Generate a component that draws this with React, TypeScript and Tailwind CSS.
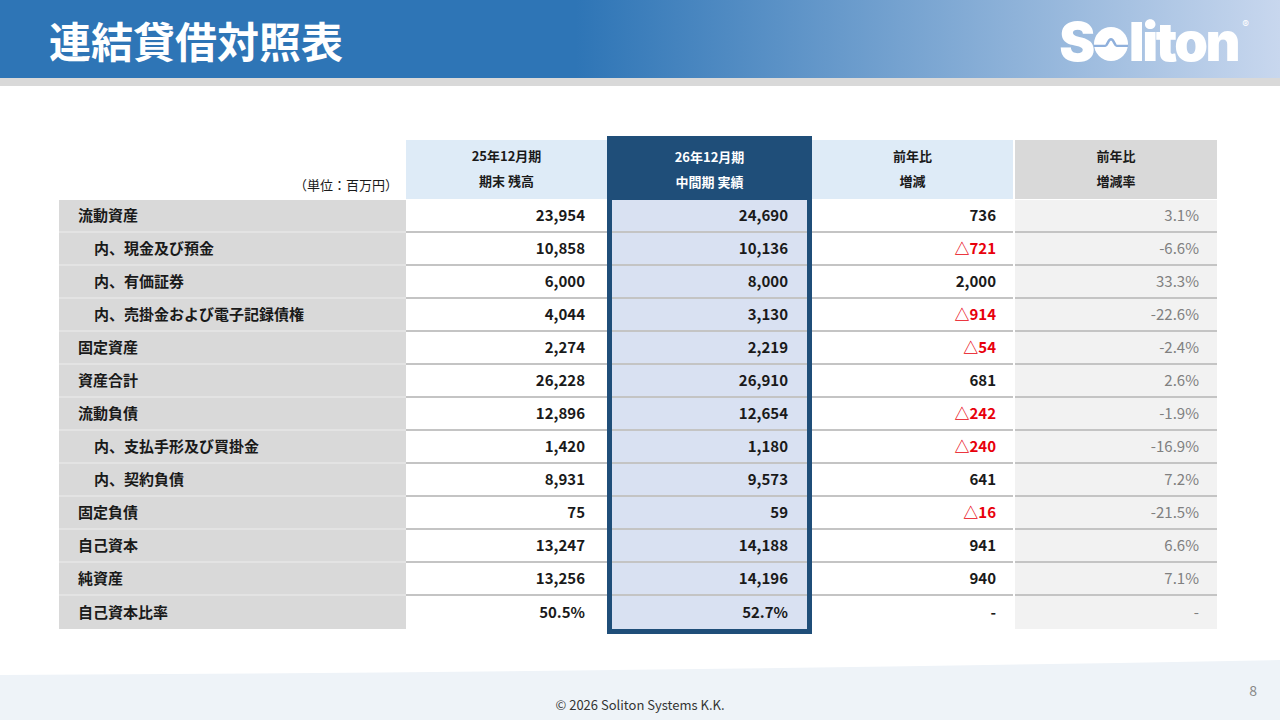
type Row = {
  label: string;
  sub?: boolean;
  a: string;
  b: string;
  c: string;
  neg?: boolean;
  d: string;
};

const rows: Row[] = [
  { label: "流動資産", a: "23,954", b: "24,690", c: "736", d: "3.1%" },
  { label: "内、現金及び預金", sub: true, a: "10,858", b: "10,136", c: "△721", neg: true, d: "-6.6%" },
  { label: "内、有価証券", sub: true, a: "6,000", b: "8,000", c: "2,000", d: "33.3%" },
  { label: "内、売掛金および電子記録債権", sub: true, a: "4,044", b: "3,130", c: "△914", neg: true, d: "-22.6%" },
  { label: "固定資産", a: "2,274", b: "2,219", c: "△54", neg: true, d: "-2.4%" },
  { label: "資産合計", a: "26,228", b: "26,910", c: "681", d: "2.6%" },
  { label: "流動負債", a: "12,896", b: "12,654", c: "△242", neg: true, d: "-1.9%" },
  { label: "内、支払手形及び買掛金", sub: true, a: "1,420", b: "1,180", c: "△240", neg: true, d: "-16.9%" },
  { label: "内、契約負債", sub: true, a: "8,931", b: "9,573", c: "641", d: "7.2%" },
  { label: "固定負債", a: "75", b: "59", c: "△16", neg: true, d: "-21.5%" },
  { label: "自己資本", a: "13,247", b: "14,188", c: "941", d: "6.6%" },
  { label: "純資産", a: "13,256", b: "14,196", c: "940", d: "7.1%" },
  { label: "自己資本比率", a: "50.5%", b: "52.7%", c: "-", d: "-" },
];

const font = { fontFamily: '"Noto Sans CJK JP", "Noto Sans", sans-serif' };

function HeadCell({ top, bottom, className }: { top: string; bottom: string; className: string }) {
  return (
    <div className={`flex h-[59px] flex-col items-center justify-center pb-[3px] text-[13px] font-bold leading-[25px] ${className}`}>
      <span>{top}</span>
      <span>{bottom}</span>
    </div>
  );
}

function Logo() {
  return (
    <div
      className="relative mt-[6px] flex items-baseline text-[54px] font-black leading-none tracking-[-2.5px] text-white"
      style={{ fontFamily: "Inter, sans-serif" }}
    >
      <span>S</span>
      <svg width="34" height="34" viewBox="0 0 36 36" className="ml-[1px] mr-[1px]">
        <circle cx="18" cy="18" r="18" fill="white" />
        <path
          d="M0 20 H12 C14 20 15 13 18 13 C21 13 22 20 24 20 H36"
          fill="none"
          stroke="#8fb0dc"
          strokeWidth="2.6"
        />
      </svg>
      <span>liton</span>
      <span className="absolute -right-[11px] top-[4px] text-[10px] font-normal leading-none tracking-normal">®</span>
    </div>
  );
}

export default function App() {
  return (
    <div className="relative h-[720px] w-[1280px] overflow-hidden bg-white text-[#1a1a1a]" style={font}>
      {/* header */}
      <div className="flex h-[78px] items-center justify-between bg-[linear-gradient(90deg,#2e75b6_0%,#2e75b6_45%,#c8d7ee_100%)] pl-[49px] pr-[42px]">
        <h1 className="text-[42px] font-bold text-white">連結貸借対照表</h1>
        <Logo />
      </div>
      <div className="h-[8px] bg-[#d9d9d9]" />

      {/* table */}
      <div className="ml-[59px] mt-[50px] flex items-start">
        {/* label column */}
        <div className="mt-[4px] w-[347px]">
          <div className="flex h-[59px] items-end justify-end pb-[5px] pr-[8px] text-[13px]">（単位：百万円）</div>
          <div className="mt-[1px]">
            {rows.map((r, i) => (
              <div
                key={r.label}
                className={`flex h-[33px] items-center bg-[#d9d9d9] text-[15px] font-bold ${r.sub ? "pl-[35px]" : "pl-[19px]"} ${i < rows.length - 1 ? "border-b-2 border-[#e3e3e3]" : ""}`}
              >
                {r.label}
              </div>
            ))}
          </div>
        </div>

        {/* previous year */}
        <div className="mt-[4px] w-[201px]">
          <HeadCell top="25年12月期" bottom="期末 残高" className="bg-[#deebf7]" />
          <div className="mt-[1px]">
            {rows.map((r, i) => (
              <div
                key={r.label}
                className={`flex h-[33px] items-center justify-end pr-[22px] text-[15px] font-bold ${i < rows.length - 1 ? "border-b-2 border-[#c4c4c4]" : ""}`}
              >
                {r.a}
              </div>
            ))}
          </div>
        </div>

        {/* current year, framed */}
        <div className="w-[205px] border-[5px] border-[#1f4e79] bg-[#1f4e79]">
          <HeadCell top="26年12月期" bottom="中間期 実績" className="text-white" />
          <div className="bg-[#d9e1f2]">
            {rows.map((r, i) => (
              <div
                key={r.label}
                className={`flex h-[33px] items-center justify-end pr-[19px] text-[15px] font-bold ${i < rows.length - 1 ? "border-b-2 border-[#c4c4c4]" : ""}`}
              >
                {r.b}
              </div>
            ))}
          </div>
        </div>

        {/* change */}
        <div className="mt-[4px] w-[201px]">
          <HeadCell top="前年比" bottom="増減" className="bg-[#deebf7]" />
          <div className="mt-[1px]">
            {rows.map((r, i) => (
              <div
                key={r.label}
                className={`flex h-[33px] items-center justify-end pr-[17px] text-[15px] font-bold ${r.neg ? "text-[#e8000b]" : ""} ${i < rows.length - 1 ? "border-b-2 border-[#c4c4c4]" : ""}`}
              >
                {r.c}
              </div>
            ))}
          </div>
        </div>

        {/* change rate */}
        <div className="ml-[2px] mt-[4px] w-[202px]">
          <HeadCell top="前年比" bottom="増減率" className="bg-[#d9d9d9]" />
          <div className="mt-[1px] bg-[#f2f2f2]">
            {rows.map((r, i) => (
              <div
                key={r.label}
                className={`flex h-[33px] items-center justify-end pr-[18px] text-[15px] text-[#808080] ${i < rows.length - 1 ? "border-b-2 border-[#c4c4c4]" : ""}`}
              >
                {r.d}
              </div>
            ))}
          </div>
        </div>
      </div>

      {/* footer */}
      <svg className="absolute bottom-0 left-0" width="1280" height="60" viewBox="0 0 1280 60">
        <path d="M0 15 Q640 12 1280 0 L1280 60 L0 60 Z" fill="#eef3f8" />
      </svg>
      <div className="absolute bottom-[6px] left-0 w-full text-center text-[13px] text-[#333]">© 2026 Soliton Systems K.K.</div>
      <div className="absolute right-[23px] top-[680px] text-[14px] text-[#888]">8</div>
    </div>
  );
}
